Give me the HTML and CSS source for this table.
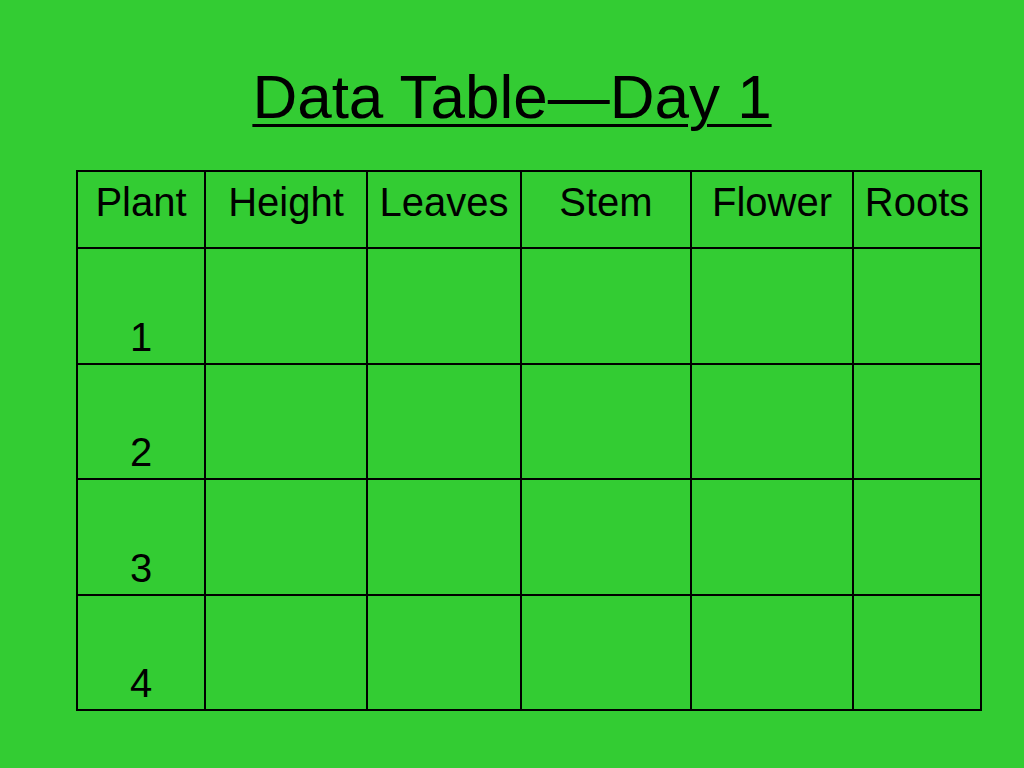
FILE: index.html
```html
<!DOCTYPE html>
<html>
<head>
<meta charset="utf-8">
<link rel="stylesheet" href="styles.css">
</head>
<body>
<div class="slide">
  <h1 class="title">Data Table—Day 1</h1>
  <table class="data">
    <colgroup>
      <col class="c1"><col class="c2"><col class="c3"><col class="c4"><col class="c5"><col class="c6">
    </colgroup>
    <thead>
      <tr><th>Plant</th><th>Height</th><th>Leaves</th><th>Stem</th><th>Flower</th><th>Roots</th></tr>
    </thead>
    <tbody>
      <tr><td>1</td><td></td><td></td><td></td><td></td><td></td></tr>
      <tr><td>2</td><td></td><td></td><td></td><td></td><td></td></tr>
      <tr><td>3</td><td></td><td></td><td></td><td></td><td></td></tr>
      <tr><td>4</td><td></td><td></td><td></td><td></td><td></td></tr>
    </tbody>
  </table>
</div>
</body>
</html>
```
FILE: styles.css
```css
html, body {
  margin: 0;
  padding: 0;
  background: #33cc33;
}
.slide {
  width: 1024px;
  height: 768px;
  box-sizing: border-box;
  padding-top: 62px;
  font-family: "Liberation Sans", Arial, sans-serif;
  color: #000;
}
.title {
  margin: 0;
  height: 108px;
  font-size: 62px;
  font-weight: normal;
  line-height: 70px;
  text-align: center;
  text-decoration: underline;
  text-decoration-thickness: 3px;
  text-underline-offset: 6px;
}
.data {
  margin-left: 76px;
  border-collapse: collapse;
  table-layout: fixed;
  width: 904px;
}
.c1 { width: 128px; }
.c2 { width: 162px; }
.c3 { width: 154px; }
.c4 { width: 170px; }
.c5 { width: 162px; }
.c6 { width: 128px; }
.data th, .data td {
  border: 2px solid #000;
  padding: 0;
  font-size: 40px;
  font-weight: normal;
  line-height: 46px;
  text-align: center;
}
.data th {
  height: 77px;
  vertical-align: top;
  padding-top: 7px;
  box-sizing: border-box;
}
.data td {
  height: 115.5px;
  vertical-align: bottom;
  padding-bottom: 3px;
  box-sizing: border-box;
}
```
